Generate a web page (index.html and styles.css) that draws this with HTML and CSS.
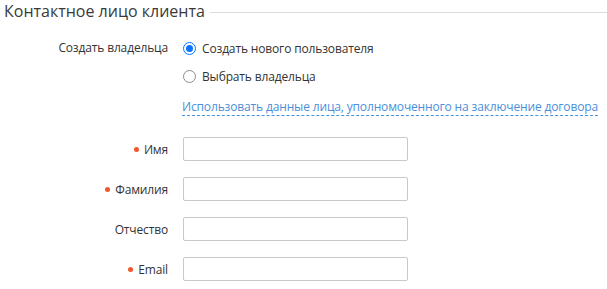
FILE: index.html
```html
<!DOCTYPE html>
<html lang="ru">
<head>
<meta charset="utf-8">
<link rel="stylesheet" href="styles.css">
</head>
<body>
<fieldset class="section">
  <div class="legend"><span class="legend-text">Контактное лицо клиента</span><span class="legend-line"></span></div>
  <div class="row row-radio">
    <div class="label">Создать владельца</div>
    <div class="control">
      <label class="radio"><span class="radio-box checked"></span>Создать нового пользователя</label>
      <label class="radio"><span class="radio-box"></span>Выбрать владельца</label>
      <a class="link" href="#">Использовать данные лица, уполномоченного на заключение договора</a>
    </div>
  </div>
  <div class="row row-field">
    <div class="label"><span class="req"></span>Имя</div>
    <div class="control"><input class="input" type="text"></div>
  </div>
  <div class="row row-field">
    <div class="label"><span class="req"></span>Фамилия</div>
    <div class="control"><input class="input" type="text"></div>
  </div>
  <div class="row row-field">
    <div class="label">Отчество</div>
    <div class="control"><input class="input" type="text"></div>
  </div>
  <div class="row row-field">
    <div class="label"><span class="req"></span>Email</div>
    <div class="control"><input class="input" type="text"></div>
  </div>
</fieldset>
</body>
</html>
```

FILE: styles.css
```css
html, body {
  margin: 0;
  padding: 0;
  background: #fff;
}
body {
  font-family: "Open Sans", "Liberation Sans", sans-serif;
  font-size: 12px;
  letter-spacing: -0.15px;
  color: #333;
}
.section {
  margin: 0;
  padding: 0 0 0 4px;
  border: 0;
}
.legend {
  display: flex;
  align-items: center;
  height: 24px;
  margin-top: -1px;
}
.legend-text {
  font-size: 16px;
  letter-spacing: 0;
  color: #3a3a3a;
  line-height: 24px;
  white-space: nowrap;
}
.legend-line {
  flex: 1;
  height: 1px;
  background: #d8dbe0;
  margin-left: 5px;
  margin-top: 2px;
}
.row {
  display: flex;
}
.label {
  flex: none;
  text-align: right;
  display: flex;
  justify-content: flex-end;
  align-items: center;
  gap: 5px;
  box-sizing: border-box;
}
.row-radio {
  margin-top: 13px;
}
.row-radio .label {
  align-items: flex-start;
  height: 24px;
  line-height: 24px;
  padding-right: 14px;
  width: 178px;
}
.row-field .label {
  width: 179px;
  padding-right: 15px;
}
.control {
  display: flex;
  flex-direction: column;
  align-items: flex-start;
}
.radio {
  display: flex;
  align-items: center;
  height: 24px;
  margin-bottom: 4px;
  cursor: pointer;
}
.radio-box {
  width: 11px;
  height: 11px;
  border: 1px solid #8c8c8c;
  border-radius: 50%;
  margin-right: 6px;
  margin-left: 1px;
  position: relative;
  background: #fff;
}
.radio-box.checked {
  border-color: #0a74ff;
}
.radio-box.checked::after {
  content: "";
  position: absolute;
  left: 2px;
  top: 2px;
  width: 7px;
  height: 7px;
  border-radius: 50%;
  background: #0a74ff;
}
.link {
  margin-top: 6px;
  color: #4a90d9;
  text-decoration: none;
  border-bottom: 1px dashed #4a90d9;
  line-height: 17px;
  white-space: nowrap;
}
.row-field {
  height: 24px;
  margin-top: 16px;
}
.row-radio + .row-field {
  margin-top: 21px;
}
.req {
  width: 5px;
  height: 5px;
  border-radius: 50%;
  background: #f0582b;
  display: inline-block;
}
.input {
  width: 225px;
  height: 24px;
  box-sizing: border-box;
  border: 1px solid #c5c8cd;
  border-radius: 2px;
  margin: 0;
  padding: 2px 6px;
  font: inherit;
  background: #fff;
}
```
